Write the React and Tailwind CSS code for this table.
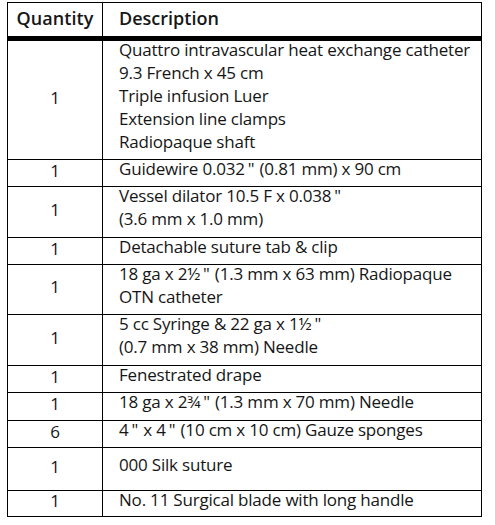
import React from "react";

const rows = [
  { q: "1", h: "h-[119px]", lines: ["Quattro intravascular heat exchange catheter", "9.3 French x 45 cm", "Triple infusion Luer", "Extension line clamps", "Radiopaque shaft"] },
  { q: "1", h: "h-[27px]", lines: ["Guidewire 0.032\" (0.81 mm) x 90 cm"] },
  { q: "1", h: "h-[51px]", lines: ["Vessel dilator 10.5 F x 0.038\"", "(3.6 mm x 1.0 mm)"] },
  { q: "1", h: "h-[27px]", lines: ["Detachable suture tab & clip"] },
  { q: "1", h: "h-[50px]", lines: ["18 ga x 2½\" (1.3 mm x 63 mm) Radiopaque", "OTN catheter"] },
  { q: "1", h: "h-[51px]", lines: ["5 cc Syringe & 22 ga x 1½\"", "(0.7 mm x 38 mm) Needle"] },
  { q: "1", h: "h-[27px]", lines: ["Fenestrated drape"] },
  { q: "1", h: "h-[28px]", lines: ["18 ga x 2¾\" (1.3 mm x 70 mm) Needle"] },
  { q: "6", h: "h-[27px]", lines: ["4\" x 4\" (10 cm x 10 cm) Gauze sponges"] },
  { q: "1", h: "h-[43px]", lines: ["000 Silk suture"], pad: "mt-[5px]" },
  { q: "1", h: "h-[25px]", lines: ["No. 11 Surgical blade with long handle"], last: true },
];

function Line({ text }) {
  const parts = text.split('"');
  return (
    <div className="whitespace-nowrap">
      {parts.map((p, k) => (
        <React.Fragment key={k}>
          {p}
          {k < parts.length - 1 && <span className="ml-[3px] mr-[1px]">"</span>}
        </React.Fragment>
      ))}
    </div>
  );
}

export default function App() {
  return (
    <div className="w-[495px] h-[525px] bg-white pt-[2px] pl-[7px] text-[#161616]" style={{ fontFamily: '"Open Sans", "Noto Sans", sans-serif' }}>
      <div className="w-[475px] border border-black flex flex-col">
        <div className="flex h-[38px] border-b-[5px] border-black box-border">
          <div className="w-[95px] border-r border-black flex items-center justify-center pb-[2px] text-[18px] font-semibold tracking-[0.1px]">
            Quantity
          </div>
          <div className="flex-1 flex items-center pl-[16px] pb-[2px] text-[18px] font-semibold">
            Description
          </div>
        </div>
        {rows.map((r, i) => (
          <div key={i} className={`flex ${r.h} box-border ${r.last ? "" : "border-b border-black"}`}>
            <div className="w-[95px] border-r border-black flex items-center justify-center pb-[6px] text-[17px] leading-[23px]">
              {r.q}
            </div>
            <div className="flex-1 pl-[16px] text-[17px] leading-[23px] tracking-[-0.2px]">
              <div className={r.pad ? r.pad : "-mt-[3px]"}>
                {r.lines.map((l, j) => (
                  <Line key={j} text={l} />
                ))}
              </div>
            </div>
          </div>
        ))}
      </div>
    </div>
  );
}
